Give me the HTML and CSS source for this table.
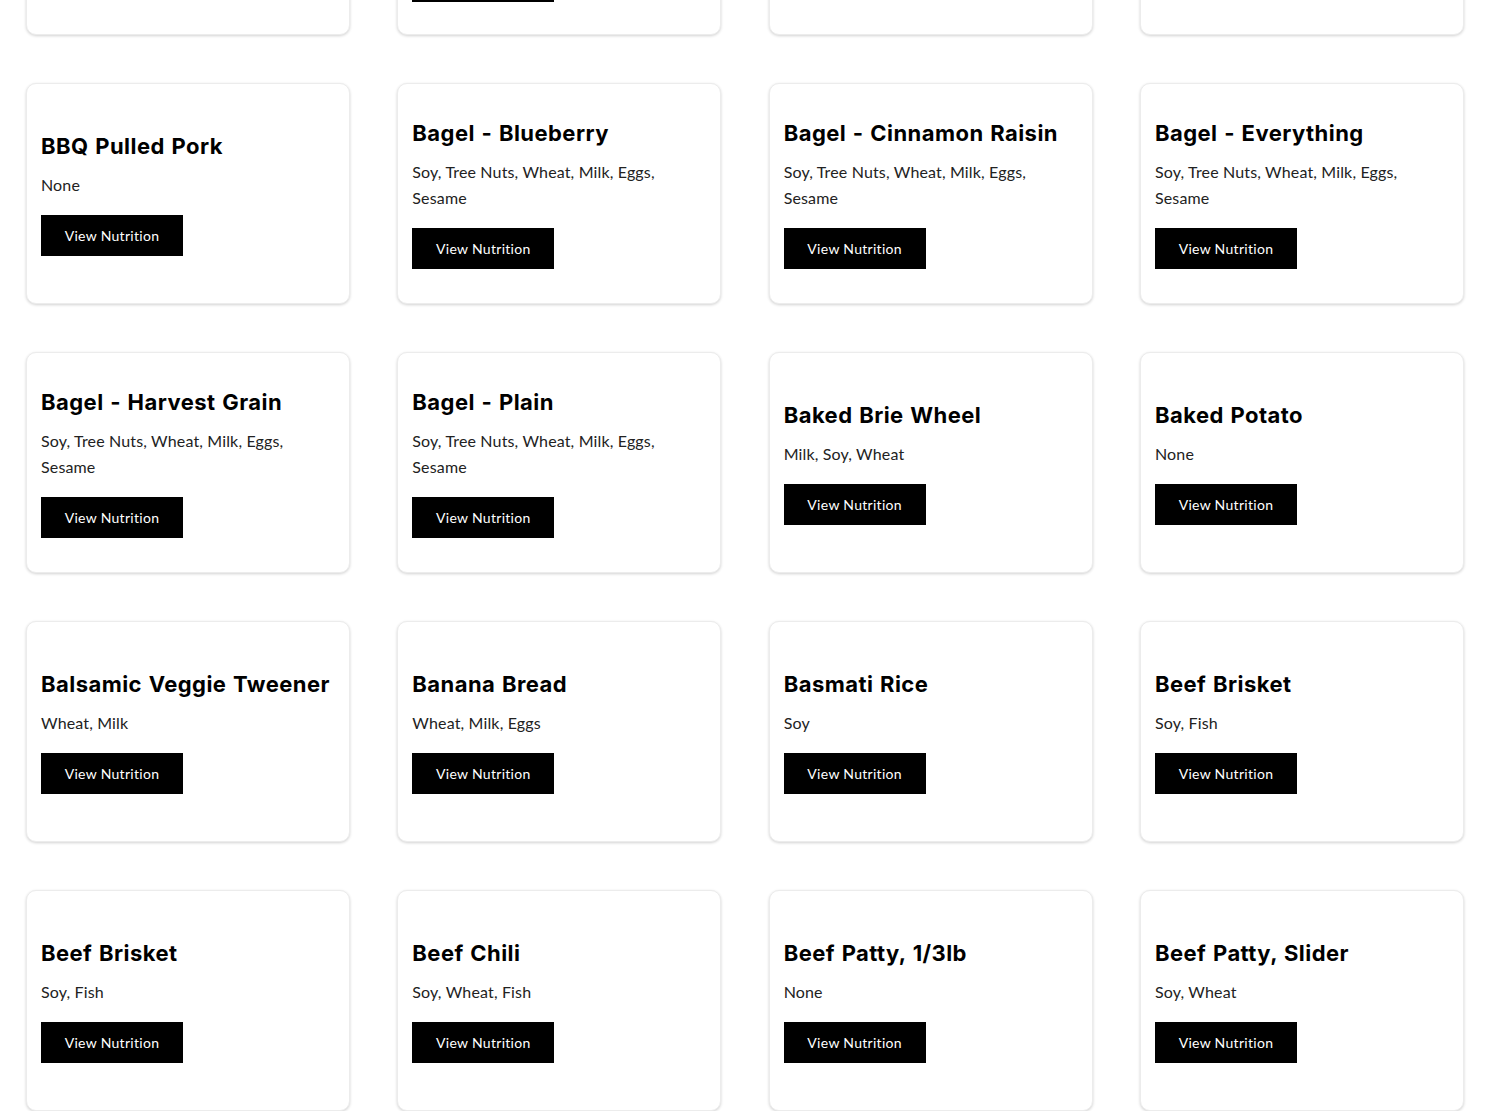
FILE: index.html
```html
<!DOCTYPE html>
<html lang="en">
<head>
<meta charset="utf-8">
<title>Menu Allergens</title>
<link rel="stylesheet" href="styles.css">
</head>
<body>
<main class="grid">
  <div class="card"><div class="content"><h3 class="title">Apple Cinnamon Oatmeal</h3><p class="allergens">Milk, Wheat</p><a class="btn">View Nutrition</a></div></div>
  <div class="card"><div class="content"><h3 class="title">Assorted Breakfast Pastries Platter</h3><p class="allergens">Wheat, Milk, Eggs</p><a class="btn">View Nutrition</a></div></div>
  <div class="card"><div class="content"><h3 class="title">Avocado Toast</h3><p class="allergens">Wheat</p><a class="btn">View Nutrition</a></div></div>
  <div class="card"><div class="content"><h3 class="title">BBQ Chicken</h3><p class="allergens">Soy</p><a class="btn">View Nutrition</a></div></div>

  <div class="card"><div class="content"><h3 class="title">BBQ Pulled Pork</h3><p class="allergens">None</p><a class="btn">View Nutrition</a></div></div>
  <div class="card"><div class="content"><h3 class="title">Bagel - Blueberry</h3><p class="allergens">Soy, Tree Nuts, Wheat, Milk, Eggs, Sesame</p><a class="btn">View Nutrition</a></div></div>
  <div class="card"><div class="content"><h3 class="title">Bagel - Cinnamon Raisin</h3><p class="allergens">Soy, Tree Nuts, Wheat, Milk, Eggs, Sesame</p><a class="btn">View Nutrition</a></div></div>
  <div class="card"><div class="content"><h3 class="title">Bagel - Everything</h3><p class="allergens">Soy, Tree Nuts, Wheat, Milk, Eggs, Sesame</p><a class="btn">View Nutrition</a></div></div>

  <div class="card"><div class="content"><h3 class="title">Bagel - Harvest Grain</h3><p class="allergens">Soy, Tree Nuts, Wheat, Milk, Eggs, Sesame</p><a class="btn">View Nutrition</a></div></div>
  <div class="card"><div class="content"><h3 class="title">Bagel - Plain</h3><p class="allergens">Soy, Tree Nuts, Wheat, Milk, Eggs, Sesame</p><a class="btn">View Nutrition</a></div></div>
  <div class="card"><div class="content"><h3 class="title">Baked Brie Wheel</h3><p class="allergens">Milk, Soy, Wheat</p><a class="btn">View Nutrition</a></div></div>
  <div class="card"><div class="content"><h3 class="title">Baked Potato</h3><p class="allergens">None</p><a class="btn">View Nutrition</a></div></div>

  <div class="card"><div class="content"><h3 class="title">Balsamic Veggie Tweener</h3><p class="allergens">Wheat, Milk</p><a class="btn">View Nutrition</a></div></div>
  <div class="card"><div class="content"><h3 class="title">Banana Bread</h3><p class="allergens">Wheat, Milk, Eggs</p><a class="btn">View Nutrition</a></div></div>
  <div class="card"><div class="content"><h3 class="title">Basmati Rice</h3><p class="allergens">Soy</p><a class="btn">View Nutrition</a></div></div>
  <div class="card"><div class="content"><h3 class="title">Beef Brisket</h3><p class="allergens">Soy, Fish</p><a class="btn">View Nutrition</a></div></div>

  <div class="card"><div class="content"><h3 class="title">Beef Brisket</h3><p class="allergens">Soy, Fish</p><a class="btn">View Nutrition</a></div></div>
  <div class="card"><div class="content"><h3 class="title">Beef Chili</h3><p class="allergens">Soy, Wheat, Fish</p><a class="btn">View Nutrition</a></div></div>
  <div class="card"><div class="content"><h3 class="title">Beef Patty, 1/3lb</h3><p class="allergens">None</p><a class="btn">View Nutrition</a></div></div>
  <div class="card"><div class="content"><h3 class="title">Beef Patty, Slider</h3><p class="allergens">Soy, Wheat</p><a class="btn">View Nutrition</a></div></div>
</main>
</body>
</html>
```

FILE: styles.css
```css
html, body {
  margin: 0;
  padding: 0;
  background: #ffffff;
}

.grid {
  display: grid;
  grid-template-columns: repeat(4, 1fr);
  column-gap: 47.33px;
  row-gap: 48px;
  padding: 0 26px;
  margin-top: -186px;
}

.card {
  height: 221px;
  box-sizing: border-box;
  background: #fff;
  border: 1px solid #ececec;
  border-radius: 10px;
  box-shadow: 0 1px 3px rgba(0, 0, 0, 0.18);
  display: flex;
  flex-direction: column;
  justify-content: center;
  padding: 0 14px;
}

.content {
  display: flex;
  flex-direction: column;
  align-items: flex-start;
}

.title {
  margin: 0;
  font-family: Inter, "Open Sans", sans-serif;
  font-weight: 700;
  font-size: 22px;
  line-height: 30px;
  color: #000;
  letter-spacing: 0.45px;
  word-spacing: 1px;
}

.allergens {
  margin: 11px 0 17px;
  font-family: Lato, "Open Sans", sans-serif;
  font-weight: 400;
  font-size: 16px;
  line-height: 26px;
  letter-spacing: 0.15px;
  color: #222;
  max-width: 262px;
}

.btn {
  display: flex;
  align-items: center;
  justify-content: center;
  width: 142px;
  height: 41px;
  background: #000;
  color: #fff;
  font-family: Lato, "Open Sans", sans-serif;
  font-size: 14px;
  letter-spacing: 0.3px;
  cursor: pointer;
}
```
